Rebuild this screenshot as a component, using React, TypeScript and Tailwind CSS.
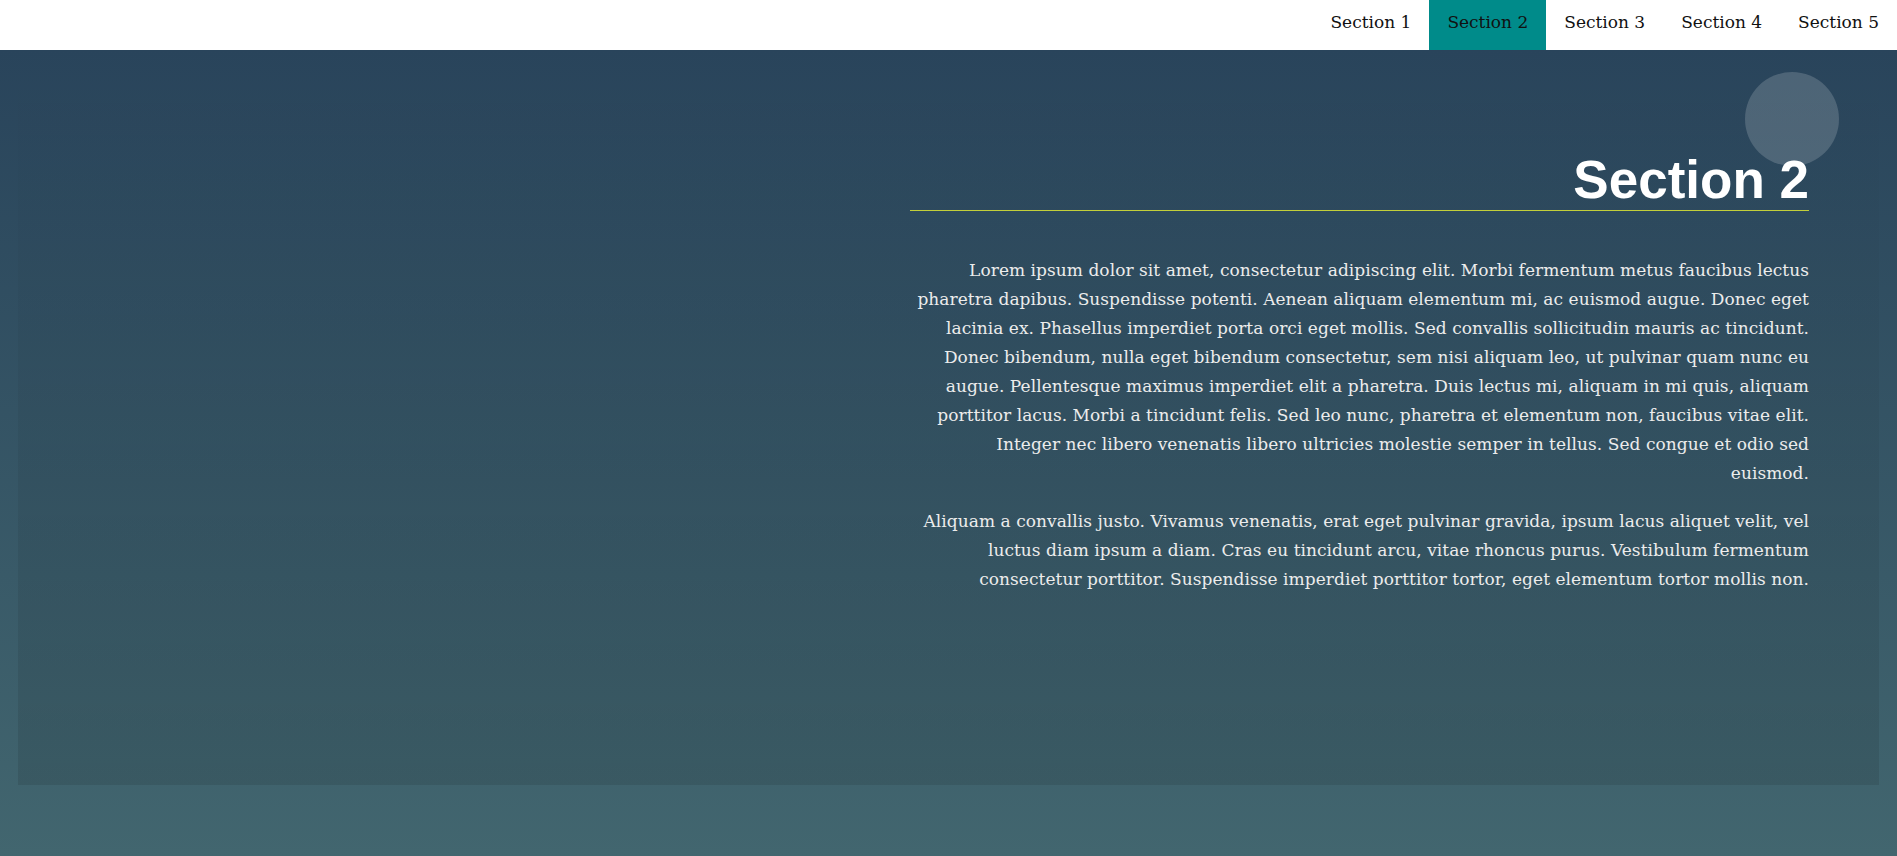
import React from 'react';

const sections = ['Section 1', 'Section 2', 'Section 3', 'Section 4', 'Section 5'];

export default function App() {
  const active = 'Section 2';

  return (
    <div className="h-[856px] overflow-hidden bg-white font-['DejaVu_Serif',serif]">
      <nav className="h-[50px] bg-white flex justify-end">
        {sections.map((s) => (
          <a
            key={s}
            className={`px-[18px] pb-[5px] flex items-center text-[17px] text-[#111] ${
              s === active ? 'bg-[#008b8a]' : 'bg-white'
            }`}
          >
            {s}
          </a>
        ))}
      </nav>

      <div className="h-[806px] bg-gradient-to-b from-[#29445b] to-[#42666f]">
        <section className="relative mx-[18px] h-[735px] bg-gradient-to-b from-black/0 to-black/10 flex justify-end pt-[99px] pr-[70px]">
          {/* decorative bubble */}
          <div className="absolute right-[40px] top-[22px] w-[94px] h-[94px] rounded-full bg-white/[0.17]" />

          <div className="relative w-[899px] flex flex-col items-end">
            <h2 className="w-full font-['Liberation_Sans',Arial,sans-serif] font-bold text-[53px] leading-[61px] text-white text-right border-b border-[#c3cf3a]">
              Section 2
            </h2>
            <div className="w-[894px] mt-[45px] text-right text-[17px] tracking-[0.05px] leading-[29px] text-[#ececec]">
              <p className="mb-[19px]">
                Lorem ipsum dolor sit amet, consectetur adipiscing elit. Morbi fermentum metus faucibus lectus
                pharetra dapibus. Suspendisse potenti. Aenean aliquam elementum mi, ac euismod augue. Donec eget
                lacinia ex. Phasellus imperdiet porta orci eget mollis. Sed convallis sollicitudin mauris ac tincidunt.
                Donec bibendum, nulla eget bibendum consectetur, sem nisi aliquam leo, ut pulvinar quam nunc eu
                augue. Pellentesque maximus imperdiet elit a pharetra. Duis lectus mi, aliquam in mi quis, aliquam
                porttitor lacus. Morbi a tincidunt felis. Sed leo nunc, pharetra et elementum non, faucibus vitae elit.
                Integer nec libero venenatis libero ultricies molestie semper in tellus. Sed congue et odio sed
                euismod.
              </p>
              <p>
                Aliquam a convallis justo. Vivamus venenatis, erat eget pulvinar gravida, ipsum lacus aliquet velit, vel
                luctus diam ipsum a diam. Cras eu tincidunt arcu, vitae rhoncus purus. Vestibulum fermentum
                consectetur porttitor. Suspendisse imperdiet porttitor tortor, eget elementum tortor mollis non.
              </p>
            </div>
          </div>
        </section>
      </div>
    </div>
  );
}
